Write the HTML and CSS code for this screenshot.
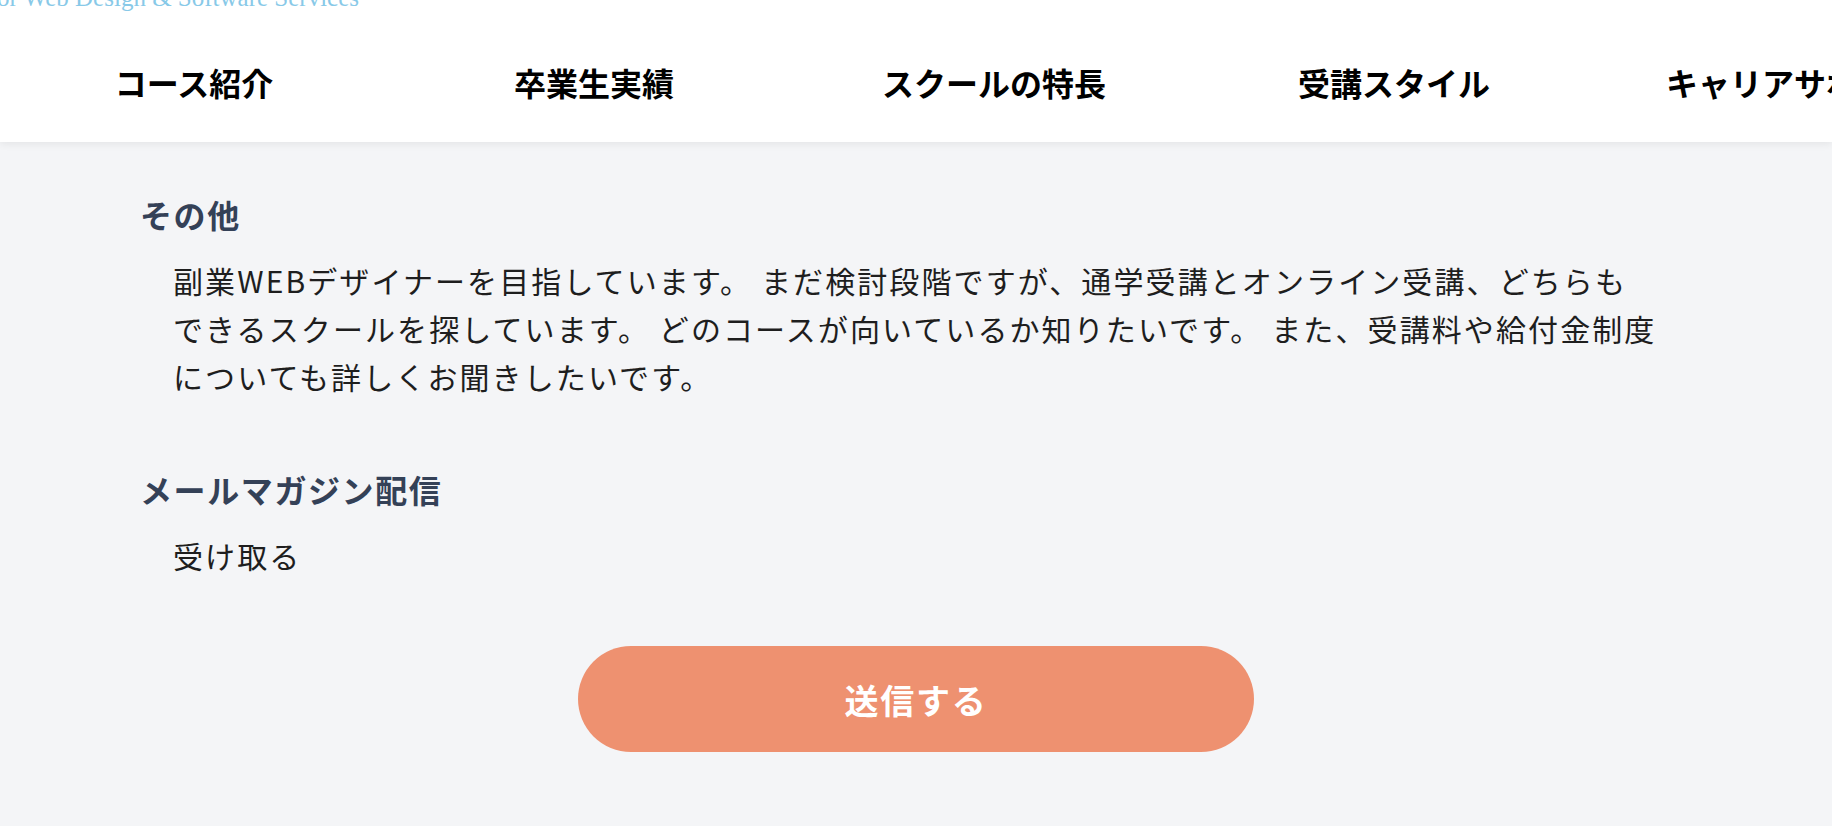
FILE: index.html
```html
<!DOCTYPE html>
<html lang="ja">
<head>
<meta charset="utf-8">
<title>確認画面</title>
<link rel="stylesheet" href="styles.css">
</head>
<body>
<header class="site-header">
  <div class="tagline">or Web Design &amp; Software Services</div>
  <nav class="gnav">
    <a class="gnav-item" href="#">コース紹介</a>
    <a class="gnav-item" href="#">卒業生実績</a>
    <a class="gnav-item" href="#">スクールの特長</a>
    <a class="gnav-item" href="#">受講スタイル</a>
    <a class="gnav-item" href="#">キャリアサポート</a>
  </nav>
</header>
<main class="confirm">
  <section class="field">
    <h2 class="field-label">その他</h2>
    <p class="field-value">副業WEBデザイナーを目指しています。 まだ検討段階ですが、通学受講とオンライン受講、どちらも<br>できるスクールを探しています。 どのコースが向いているか知りたいです。 また、受講料や給付金制度<br>についても詳しくお聞きしたいです。</p>
  </section>
  <section class="field">
    <h2 class="field-label">メールマガジン配信</h2>
    <p class="field-value">受け取る</p>
  </section>
  <div class="actions">
    <button class="submit" type="submit">送信する</button>
  </div>
</main>
</body>
</html>
```
FILE: styles.css
```css
html, body {
  margin: 0;
  padding: 0;
}
body {
  background: #f4f5f7;
  font-family: "Noto Sans CJK JP", "Noto Sans", sans-serif;
  overflow: hidden;
}
.site-header {
  height: 142px;
  background: #ffffff;
  box-shadow: 0 2px 8px rgba(0, 0, 0, 0.07);
  overflow: hidden;
  position: relative;
  z-index: 1;
}
.tagline {
  font-family: "Liberation Serif", "Times New Roman", serif;
  font-size: 25px;
  line-height: 25px;
  height: 25px;
  color: #88c9e8;
  white-space: nowrap;
  margin-top: -15px;
  margin-left: -3px;
}
.gnav {
  display: flex;
  margin-top: 48px;
  margin-left: -6px;
  white-space: nowrap;
}
.gnav-item {
  flex: 0 0 400px;
  text-align: center;
  font-size: 32px;
  font-weight: 700;
  line-height: 48px;
  color: #000000;
  text-decoration: none;
}
.confirm {
  padding: 48px 140px 0;
}
.field {
  margin: 0 0 65px;
}
.field-label {
  margin: 0;
  font-size: 32px;
  font-weight: 700;
  line-height: 48px;
  letter-spacing: 0.05em;
  color: #344157;
}
.field-value {
  margin: 18px 0 0;
  padding-left: 33px;
  font-size: 30px;
  line-height: 48px;
  letter-spacing: 2.1px;
  color: #1e1e1e;
  white-space: nowrap;
}
.actions {
  display: flex;
  justify-content: center;
  padding-top: 2px;
}
.submit {
  width: 676px;
  height: 106px;
  border: none;
  border-radius: 53px;
  background: #ee9170;
  color: #ffffff;
  font-family: "Noto Sans CJK JP", "Noto Sans", sans-serif;
  font-size: 34px;
  font-weight: 700;
  letter-spacing: 0.05em;
  cursor: pointer;
}
```
